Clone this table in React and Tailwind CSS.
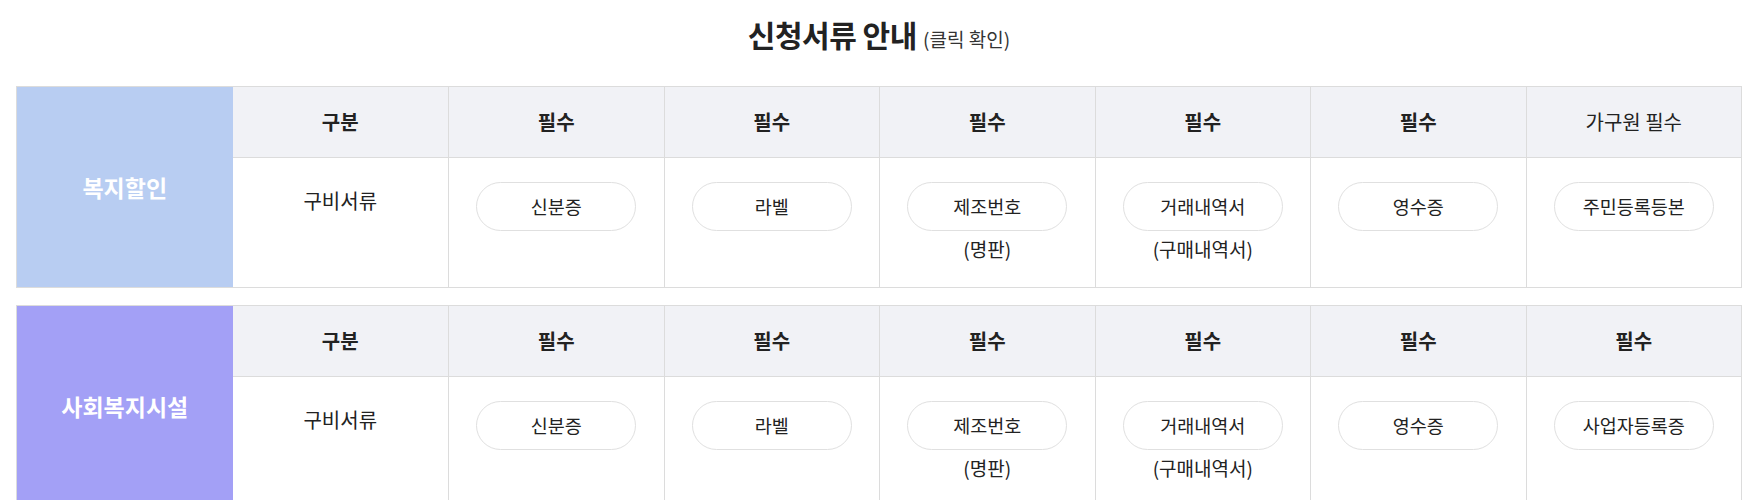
import React from "react";

const FONT = { fontFamily: '"Noto Sans CJK KR", "Noto Sans", sans-serif' };

const tables = [
  {
    label: "복지할인",
    bg: "bg-[#b8cdf2]",
    headers: [
      { t: "구분", b: true },
      { t: "필수", b: true },
      { t: "필수", b: true },
      { t: "필수", b: true },
      { t: "필수", b: true },
      { t: "필수", b: true },
      { t: "가구원 필수", b: false },
    ],
    docs: [
      { t: "신분증" },
      { t: "라벨" },
      { t: "제조번호", sub: "(명판)" },
      { t: "거래내역서", sub: "(구매내역서)" },
      { t: "영수증" },
      { t: "주민등록등본" },
    ],
  },
  {
    label: "사회복지시설",
    bg: "bg-[#a3a0f6]",
    headers: [
      { t: "구분", b: true },
      { t: "필수", b: true },
      { t: "필수", b: true },
      { t: "필수", b: true },
      { t: "필수", b: true },
      { t: "필수", b: true },
      { t: "필수", b: true },
    ],
    docs: [
      { t: "신분증" },
      { t: "라벨" },
      { t: "제조번호", sub: "(명판)" },
      { t: "거래내역서", sub: "(구매내역서)" },
      { t: "영수증" },
      { t: "사업자등록증" },
    ],
  },
];

function DocTable({ data }) {
  return (
    <div className="grid grid-cols-8 grid-rows-[70px_130px] border border-[#dcdcdc] bg-white">
      <div
        className={`row-span-2 ${data.bg} flex items-center justify-center text-white text-[23px] font-bold`}
      >
        {data.label}
      </div>
      {data.headers.map((h, i) => (
        <div
          key={i}
          className={`flex items-center justify-center bg-[#f1f2f6] text-[#222] text-[20px] ${
            h.b ? "font-bold" : "font-normal"
          } ${i === 0 ? "" : "border-l border-[#dcdcdc]"}`}
        >
          {h.t}
        </div>
      ))}
      <div className="border-t border-[#dcdcdc] flex justify-center pt-[29px] text-[20px] leading-[28px] text-[#222]">
        구비서류
      </div>
      {data.docs.map((d, i) => (
        <div
          key={i}
          className="border-t border-l border-[#dcdcdc] flex flex-col items-center pt-[24px]"
        >
          <button className="w-[160px] h-[49px] rounded-full border border-[#e0e0e0] bg-white flex items-center justify-center text-[18.5px] text-[#222]">
            {d.t}
          </button>
          {d.sub && (
            <div className="mt-[5px] text-[19px] leading-[26px] text-[#222]">{d.sub}</div>
          )}
        </div>
      ))}
    </div>
  );
}

export default function App() {
  return (
    <div className="w-[1754px] bg-white pl-[16px] pr-[12px]" style={FONT}>
      <div className="h-[86px] flex items-start justify-center pt-[13px]">
        <h2 className="text-[30px] font-bold text-[#222] leading-[42px] tracking-[-0.5px]">
          신청서류 안내{" "}
          <span className="text-[19px] font-normal text-[#333] tracking-normal">(클릭 확인)</span>
        </h2>
      </div>
      <div className="flex flex-col gap-[17px]">
        {tables.map((t, i) => (
          <DocTable key={i} data={t} />
        ))}
      </div>
    </div>
  );
}
